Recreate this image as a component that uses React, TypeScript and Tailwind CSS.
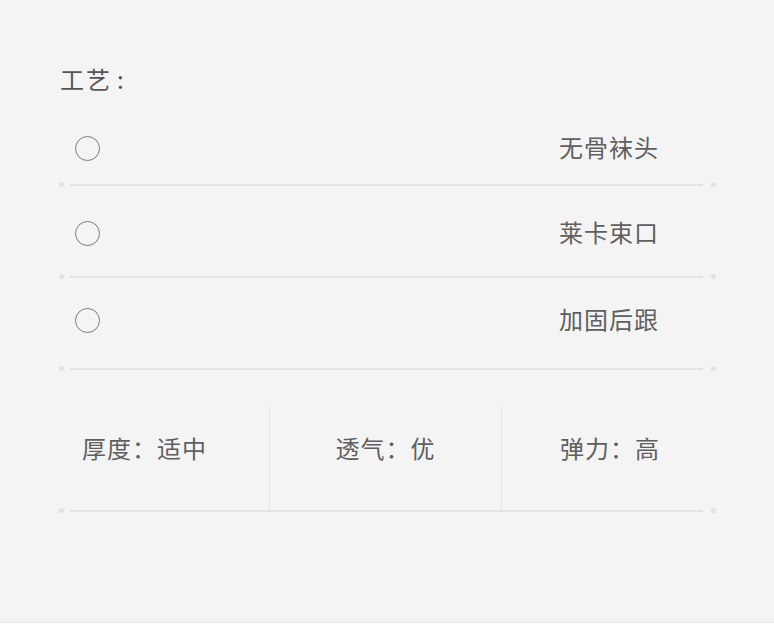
import React from "react";

const font = { fontFamily: '"Noto Sans CJK SC", "Noto Sans", sans-serif' };

function Sep() {
  return (
    <div className="flex h-[1px] items-center w-[657px] ml-[-1px]">
      <div className="w-[5px] h-[5px] rounded-full bg-[#e2e2e2] shrink-0" />
      <div className="ml-[6px] w-[633px] h-[2px] bg-[#e4e4e4] shrink-0" />
      <div className="ml-[8px] w-[5px] h-[5px] rounded-full bg-[#e2e2e2] shrink-0" />
    </div>
  );
}

function Row({ label, h, pt }: { label: string; h: string; pt: string }) {
  return (
    <div className={`${h} flex flex-col`}>
      <div className={`flex-1 flex items-start ${pt} pl-[15px] w-[599px] justify-between`}>
        <div className="w-[25px] h-[25px] rounded-full border-[1.5px] border-[#7a7a7a] shrink-0" />
        <span className="text-[24px] leading-[21px] tracking-[1px] text-[#5f5f5f]">{label}</span>
      </div>
      <Sep />
    </div>
  );
}

export default function App() {
  return (
    <div style={font} className="w-[774px] h-[623px] bg-[#f4f4f4] border-b-[1px] border-[#e6e6e6] pl-[60px] pt-[60px]">
      <div className="h-[40px] flex items-center text-[24px] leading-[36px] text-[#555] pb-[2px]">
        <span className="tracking-[2px]">工艺</span>
        <span className="ml-[5px]">:</span>
      </div>
      <Row label="无骨袜头" h="h-[85px]" pt="pt-[36px]" />
      <Row label="莱卡束口" h="h-[92px]" pt="pt-[36px]" />
      <Row label="加固后跟" h="h-[92px]" pt="pt-[31px]" />
      <div className="mt-[37px] h-[105px] flex flex-col">
        <div className="flex flex-1 ml-[10px]">
          <div className="w-[200px] flex items-start pt-[30px] leading-[24px] pl-[12px] text-[24px] tracking-[1px] text-[#5f5f5f] border-r-[1px] border-[#e2e2e2]">
            厚度：适中
          </div>
          <div className="w-[232px] flex items-start pt-[30px] leading-[24px] justify-center text-[24px] tracking-[1px] text-[#5f5f5f] border-r-[1px] border-[#e2e2e2]">
            透气：优
          </div>
          <div className="w-[201px] flex items-start pt-[30px] leading-[24px] pl-[58px] text-[24px] tracking-[1px] text-[#5f5f5f]">
            弹力：高
          </div>
        </div>
        <Sep />
      </div>
    </div>
  );
}
